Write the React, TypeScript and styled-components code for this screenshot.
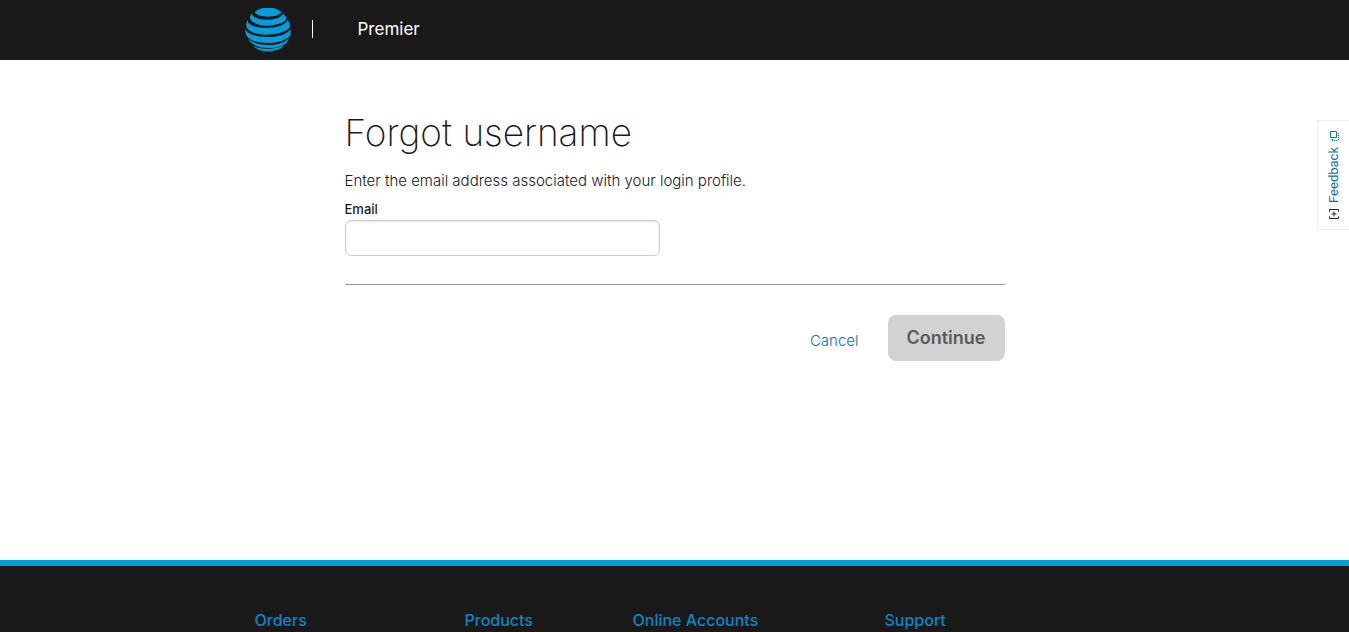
import React, { useState } from "react";
import styled, { createGlobalStyle } from "styled-components";

const GlobalStyle = createGlobalStyle`
  *, *::before, *::after { box-sizing: border-box; }
  body {
    margin: 0;
    background: #fff;
    color: #191919;
    font-family: Inter, "Open Sans", sans-serif;
    font-size: 15px;
    line-height: 20px;
  }
`;

const Page = styled.div`
  display: flex;
  flex-direction: column;
  min-height: 100vh;
`;

const Header = styled.header`
  background: #191919;
  height: 60px;
`;

const HeaderInner = styled.div`
  display: flex;
  align-items: center;
  max-width: 860px;
  height: 60px;
  margin: 0 auto;
`;

const LogoLink = styled.a`
  display: flex;
  color: #009fdb;
`;

const Brand = styled.span`
  display: flex;
  align-items: center;
  gap: 45px;
  height: 20px;
  margin-left: 21px;
  padding-bottom: 2px;
  color: #fff;
  font-size: 17px;
  line-height: 18px;

  &::before {
    content: "";
    width: 1px;
    height: 18px;
    background: #fff;
  }
`;

const Main = styled.main`
  flex: 1 0 auto;
  width: 100%;
  max-width: 660px;
  margin: 0 auto;
  padding: 50px 0 40px;
`;

const Title = styled.h1`
  margin: 0;
  font-size: 37px;
  font-weight: 200;
  line-height: 46px;
`;

const Intro = styled.p`
  margin: 15px 0 8px;
  font-weight: 300;
  line-height: 20px;
`;

const Label = styled.label`
  display: block;
  padding-bottom: 1px;
  font-size: 13px;
  font-weight: 500;
  line-height: 20px;
`;

const TextInput = styled.input`
  display: block;
  width: 315px;
  max-width: 100%;
  height: 36px;
  padding: 0 10px;
  border: 1px solid #ccc;
  border-radius: 6px;
  box-shadow: inset 0 1px 2px #e4e4e4;
  background: #fff;
  font: inherit;
`;

const Rule = styled.hr`
  height: 1px;
  margin: 28px 0 30px;
  border: 0;
  background: #959595;
`;

const Actions = styled.div`
  display: flex;
  align-items: center;
  justify-content: flex-end;
  gap: 29px;
`;

const CancelLink = styled.a`
  padding-top: 5px;
  color: #0574ac;
  font-weight: 300;
  text-decoration: none;
`;

const SubmitButton = styled.button`
  height: 46px;
  padding: 0 19px;
  border: 0;
  border-radius: 8px;
  background: #d2d2d2;
  color: #5a5a5a;
  font-family: inherit;
  font-size: 18px;
  font-weight: 600;
  line-height: 24px;
`;

const Footer = styled.footer`
  border-top: 6px solid #009fdb;
  background: #191919;
`;

const FooterNav = styled.nav`
  display: grid;
  grid-template-columns: 210fr 168fr 252fr 230fr;
  max-width: 860px;
  margin: 0 auto;
  padding-top: 44px;
`;

const FooterLink = styled.a`
  padding: 0 0 2px 10px;
  color: #0b86c4;
  font-size: 16px;
  font-weight: 500;
  line-height: 20px;
  text-decoration: none;
`;

const FeedbackTab = styled.button`
  position: fixed;
  top: 120px;
  right: 0;
  display: flex;
  flex-direction: column;
  align-items: center;
  justify-content: center;
  gap: 6px;
  width: 32px;
  height: 110px;
  padding: 0;
  border: 1px solid #ededed;
  border-right: 0;
  background: #fff;
  color: #0574ac;
  font: 13px/14px Roboto, sans-serif;
`;

const FeedbackText = styled.span`
  writing-mode: vertical-rl;
  transform: rotate(180deg);
`;

const footerLinks = ["Orders", "Products", "Online Accounts", "Support"];

function Globe() {
  return (
    <svg width="46" height="44" viewBox="29 24 138 132" fill="currentColor" aria-hidden="true">
      <path d="M58 37C66 27 82 23 98 23S130 27 138 37C134 45 116 50 98 50S62 45 58 37Z" />
      <path d="M50 41C52 53 72 59 96 59C118 59 138 52 143 41C150 46 155 52 153 58C146 69 120 77 96 77C70 77 47 68 44 55C43 49 46 44 50 41Z" />
      <path d="M37 60C36 75 62 84 92 84C124 84 150 76 157 60C162 68 165 76 163 82C153 95 126 104 92 104C58 104 34 92 33 78C32 70 34 64 37 60Z" />
      <path d="M31 86C34 102 62 111 96 111C130 111 158 102 165 86C167 94 166 102 164 107C150 121 126 129 96 129C64 129 36 118 31 101C30 95 30 90 31 86Z" />
      <path d="M38 115C50 129 72 135 98 135C126 135 150 128 161 113C159 120 155 127 150 131C138 140 118 144 98 144C72 144 46 135 38 115Z" />
      <path d="M52 137C78 150 118 150 146 136C141 142 134 147 128 149C108 154 86 154 70 149C63 146 57 142 52 137Z" />
      <path d="M74 153C90 156 108 156 122 153C108 158 88 158 74 153Z" />
    </svg>
  );
}

export default function App() {
  const [email, setEmail] = useState("");
  return (
    <Page>
      <GlobalStyle />
      <Header>
        <HeaderInner>
          <LogoLink href="#" aria-label="AT&T home">
            <Globe />
          </LogoLink>
          <Brand>Premier</Brand>
        </HeaderInner>
      </Header>
      <Main>
        <Title>Forgot username</Title>
        <Intro>Enter the email address associated with your login profile.</Intro>
        <form onSubmit={(e) => e.preventDefault()}>
          <Label htmlFor="email">Email</Label>
          <TextInput id="email" type="email" value={email} onChange={(e) => setEmail(e.target.value)} />
          <Rule />
          <Actions>
            <CancelLink href="#">Cancel</CancelLink>
            <SubmitButton type="submit" disabled={!email}>Continue</SubmitButton>
          </Actions>
        </form>
      </Main>
      <Footer>
        <FooterNav>
          {footerLinks.map((name) => (
            <FooterLink href="#" key={name}>{name}</FooterLink>
          ))}
        </FooterNav>
      </Footer>
      <FeedbackTab type="button">
        <svg width="10" height="10" viewBox="0 0 10 10" fill="none" stroke="currentColor" aria-hidden="true">
          <path d="M1.5 .5h6v6h-6z" />
          <path d="M9.5 2v8M3 9.5h6M3.5 8v2" strokeDasharray="1 1" />
        </svg>
        <FeedbackText>Feedback</FeedbackText>
        <svg width="10" height="10" viewBox="0 0 10 10" fill="none" stroke="#222" aria-hidden="true">
          <path d="M.5 2.500v-2h9v2M.5 7.500v2h9v-2M5 2.500v5M2.500 5h5" />
        </svg>
      </FeedbackTab>
    </Page>
  );
}
